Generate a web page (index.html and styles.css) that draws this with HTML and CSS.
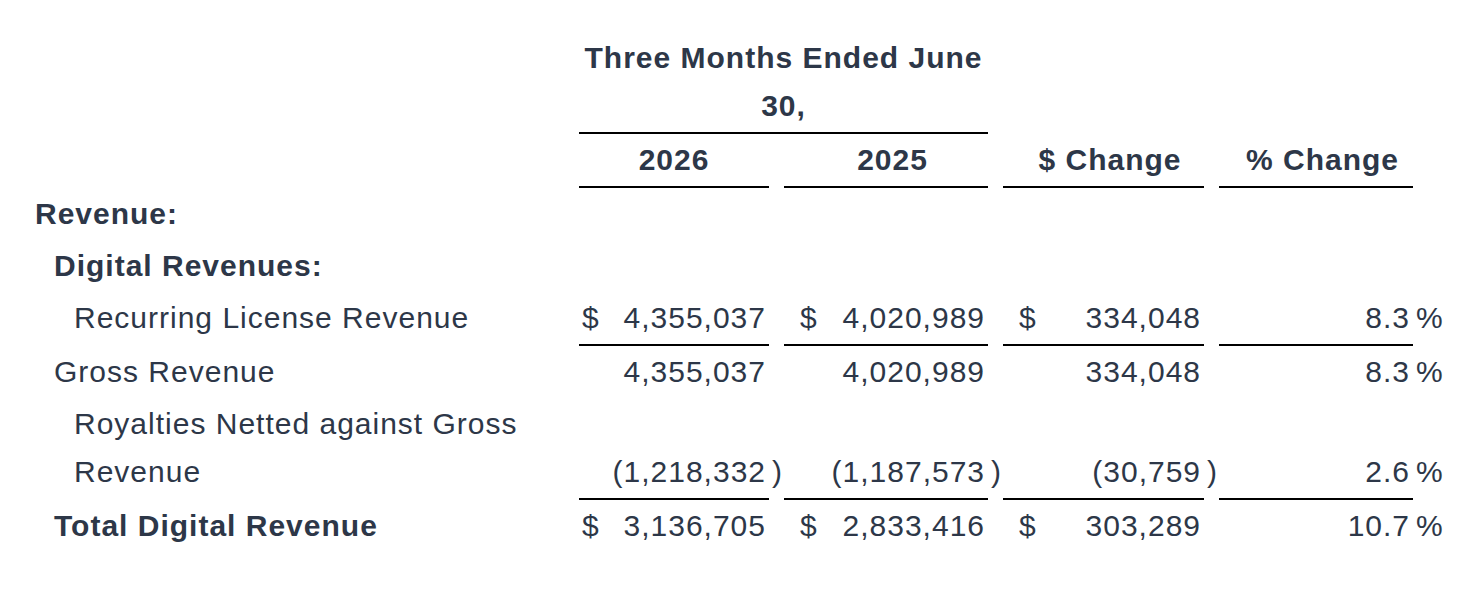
FILE: index.html
```html
<!DOCTYPE html>
<html lang="en">
<head>
<meta charset="utf-8">
<title>Digital Revenue</title>
<link rel="stylesheet" href="styles.css">
</head>
<body>
<div class="page">
  <table class="fin">
    <colgroup>
      <col class="c-label">
      <col class="c-g1">
      <col class="c-sfx">
      <col class="c-g2">
      <col class="c-sfx">
      <col class="c-g3">
      <col class="c-sfx">
      <col class="c-g4">
      <col class="c-sfx4">
    </colgroup>
    <thead>
      <tr class="ruled">
        <td></td>
        <th class="head span-head bb" colspan="3">Three Months Ended June 30,</th>
        <td></td><td></td><td></td><td></td><td></td>
      </tr>
      <tr class="ruled">
        <td></td>
        <th class="head bb">2026</th>
        <td></td>
        <th class="head head-shift bb">2025</th>
        <td></td>
        <th class="head head-shift bb">$ Change</th>
        <td></td>
        <th class="head head-shift bb">% Change</th>
        <td></td>
      </tr>
    </thead>
    <tbody>
      <tr>
        <td class="label l0 strong">Revenue:</td>
        <td colspan="8"></td>
      </tr>
      <tr>
        <td class="label l1 strong">Digital Revenues:</td>
        <td colspan="8"></td>
      </tr>
      <tr class="ruled">
        <td class="label l2">Recurring License Revenue</td>
        <td class="amt first bb"><div class="amt-in"><span class="cur">$</span><span class="num">4,355,037</span></div></td>
        <td class="sfx"></td>
        <td class="amt bb"><div class="amt-in"><span class="cur">$</span><span class="num">4,020,989</span></div></td>
        <td class="sfx"></td>
        <td class="amt bb"><div class="amt-in"><span class="cur">$</span><span class="num">334,048</span></div></td>
        <td class="sfx"></td>
        <td class="amt bb"><div class="amt-in"><span class="num">8.3</span></div></td>
        <td class="sfx">%</td>
      </tr>
      <tr>
        <td class="label l1">Gross Revenue</td>
        <td class="amt first"><div class="amt-in"><span class="num">4,355,037</span></div></td>
        <td class="sfx"></td>
        <td class="amt"><div class="amt-in"><span class="num">4,020,989</span></div></td>
        <td class="sfx"></td>
        <td class="amt"><div class="amt-in"><span class="num">334,048</span></div></td>
        <td class="sfx"></td>
        <td class="amt"><div class="amt-in"><span class="num">8.3</span></div></td>
        <td class="sfx">%</td>
      </tr>
      <tr class="ruled">
        <td class="label l2">Royalties Netted against Gross Revenue</td>
        <td class="amt first bb"><div class="amt-in"><span class="num">(1,218,332</span></div></td>
        <td class="sfx">)</td>
        <td class="amt bb"><div class="amt-in"><span class="num">(1,187,573</span></div></td>
        <td class="sfx">)</td>
        <td class="amt bb"><div class="amt-in"><span class="num">(30,759</span></div></td>
        <td class="sfx">)</td>
        <td class="amt bb"><div class="amt-in"><span class="num">2.6</span></div></td>
        <td class="sfx">%</td>
      </tr>
      <tr>
        <td class="label l1 strong">Total Digital Revenue</td>
        <td class="amt first"><div class="amt-in"><span class="cur">$</span><span class="num">3,136,705</span></div></td>
        <td class="sfx"></td>
        <td class="amt"><div class="amt-in"><span class="cur">$</span><span class="num">2,833,416</span></div></td>
        <td class="sfx"></td>
        <td class="amt"><div class="amt-in"><span class="cur">$</span><span class="num">303,289</span></div></td>
        <td class="sfx"></td>
        <td class="amt"><div class="amt-in"><span class="num">10.7</span></div></td>
        <td class="sfx">%</td>
      </tr>
    </tbody>
  </table>
</div>
</body>
</html>
```

FILE: styles.css
```css
html, body {
  margin: 0;
  padding: 0;
  background: #ffffff;
}

body {
  font-family: "Liberation Sans", Arial, sans-serif;
  font-size: 30px;
  letter-spacing: 1px;
  line-height: 48px;
  color: #2d3748;
}

.page {
  padding: 32px 0 0 32px;
}

.fin {
  table-layout: fixed;
  width: 1413px;
  border-collapse: separate;
  border-spacing: 0;
}

.c-label { width: 547px; }
.c-g1 { width: 190px; }
.c-g2 { width: 204px; }
.c-g3 { width: 201px; }
.c-g4 { width: 194px; }
.c-sfx { width: 15px; }
.c-sfx4 { width: 32px; }

.fin td,
.fin th {
  padding: 2px 0;
  vertical-align: bottom;
}

.fin .ruled > td,
.fin .ruled > th {
  border-bottom: 2px solid transparent;
}

.fin .ruled > .bb {
  border-bottom-color: #000000;
}

.fin .head {
  font-weight: bold;
  text-align: center;
  white-space: nowrap;
}

.fin .span-head {
  white-space: normal;
  padding-left: 3px;
  padding-right: 3px;
}

.fin .head-shift {
  padding-left: 13px;
}

.fin .label {
  text-align: left;
  padding-right: 8px;
}

.fin .l0 { padding-left: 3px; }
.fin .l1 { padding-left: 22px; }
.fin .l2 { padding-left: 42px; }

.fin .strong {
  font-weight: bold;
}

.fin .amt {
  padding-left: 16px;
  padding-right: 3px;
  white-space: nowrap;
}

.fin .amt.first {
  padding-left: 3px;
}

.amt-in {
  display: flex;
  align-items: baseline;
}

.num {
  margin-left: auto;
}

.fin .sfx {
  padding-left: 3px;
  white-space: nowrap;
}
```
